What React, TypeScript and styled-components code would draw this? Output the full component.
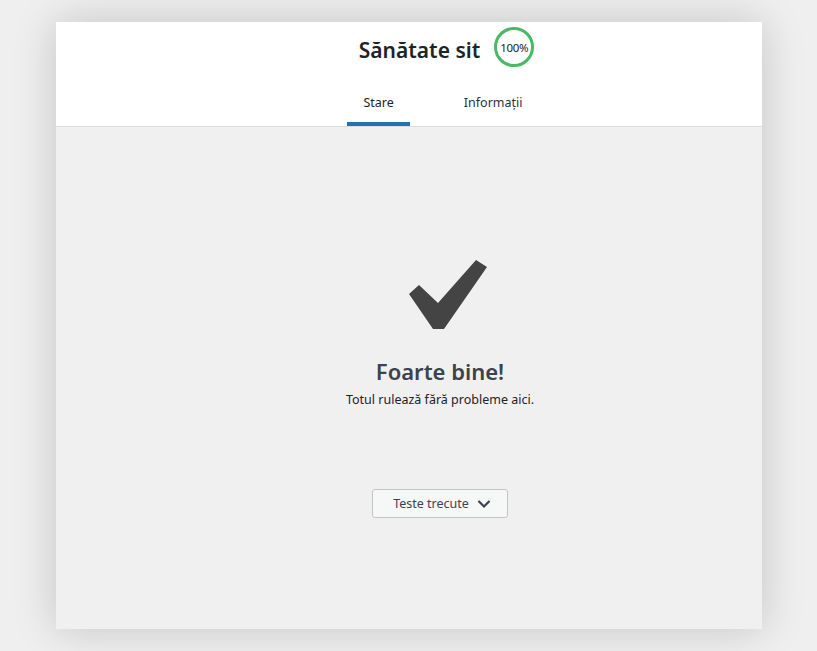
import React from "react";
import styled, { createGlobalStyle } from "styled-components";

const Global = createGlobalStyle`
  html, body { margin: 0; padding: 0; }
  body {
    background: #efefef;
    font-family: "Noto Sans", "Open Sans", sans-serif;
    color: #3c434a;
  }
`;

const Page = styled.div`
  padding: 22px 55px 22px 56px;
  box-sizing: border-box;
  width: 817px;
  height: 651px;
`;

const Panel = styled.div`
  width: 706px;
  height: 607px;
  background: #f0f0f1;
  box-shadow: 0 0 40px rgba(0, 0, 0, 0.18);
  display: flex;
  flex-direction: column;
`;

const Header = styled.header`
  background: #fff;
  border-bottom: 1px solid #dcdcde;
  display: flex;
  flex-direction: column;
  align-items: center;
  padding-left: 62px;
  height: 105px;
  box-sizing: border-box;
`;

const TitleRow = styled.div`
  display: flex;
  align-items: center;
  gap: 14px;
  margin-top: 5px;
  margin-left: 13px;
  height: 40px;
`;

const Title = styled.h1`
  margin: 6px 0 0;
  font-size: 21px;
  font-weight: 600;
  color: #1d2327;
`;

const Progress = styled.div`
  width: 34px;
  height: 34px;
  border: 3px solid #4ab866;
  border-radius: 50%;
  display: flex;
  align-items: center;
  justify-content: center;
  font-size: 11.5px;
  color: #1d2327;
  letter-spacing: -0.3px;
`;

const Tabs = styled.nav`
  display: flex;
  gap: 38px;
  margin-top: auto;
  margin-left: 6px;
`;

const Tab = styled.a<{ $active?: boolean }>`
  display: block;
  padding: 0 16px 10px;
  font-size: 12.5px;
  line-height: 18px;
  font-weight: 400;
  color: ${(p) => (p.$active ? "#1d2327" : "#2c3338")};
  border-bottom: 4px solid ${(p) => (p.$active ? "#2271b1" : "transparent")};
`;

const Body = styled.main`
  flex: 1;
  display: flex;
  flex-direction: column;
  align-items: center;
  padding-left: 62px;
  padding-top: 132px;
`;

const Check = styled.svg`
  display: block;
  margin-left: 15px;
`;

const Heading = styled.h2`
  margin: 26px 0 6px;
  font-size: 22px;
  font-weight: 600;
  color: #3c434a;
  line-height: 28px;
`;

const Sub = styled.p`
  margin: 0;
  font-size: 12.5px;
  line-height: 18px;
  color: #1d2327;
`;

const ToggleButton = styled.button`
  margin-top: 80px;
  height: 29px;
  width: 136px;
  display: flex;
  align-items: center;
  justify-content: center;
  gap: 8px;
  background: #f6f7f7;
  border: 1px solid #c3c4c7;
  border-radius: 3px;
  font-family: inherit;
  font-size: 12.5px;
  color: #3c434a;
  padding: 0 0 0 4px;
`;

export default function App() {
  return (
    <>
      <Global />
      <Page>
        <Panel>
          <Header>
            <TitleRow>
              <Title>Sănătate sit</Title>
              <Progress>100%</Progress>
            </TitleRow>
            <Tabs>
              <Tab $active>Stare</Tab>
              <Tab>Informații</Tab>
            </Tabs>
          </Header>
          <Body>
            <Check width="80" height="72" viewBox="408 259 80 72">
              <polygon
                points="409,294 419,285 438,303 476,260 487,267 444,329 433,329"
                fill="#444444"
              />
            </Check>
            <Heading>Foarte bine!</Heading>
            <Sub>Totul rulează fără probleme aici.</Sub>
            <ToggleButton>
              Teste trecute
              <svg width="14" height="10" viewBox="0 0 14 10">
                <path d="M1.5 2 L7 7.5 L12.5 2" fill="none" stroke="#3c434a" strokeWidth="2.2" />
              </svg>
            </ToggleButton>
          </Body>
        </Panel>
      </Page>
    </>
  );
}
